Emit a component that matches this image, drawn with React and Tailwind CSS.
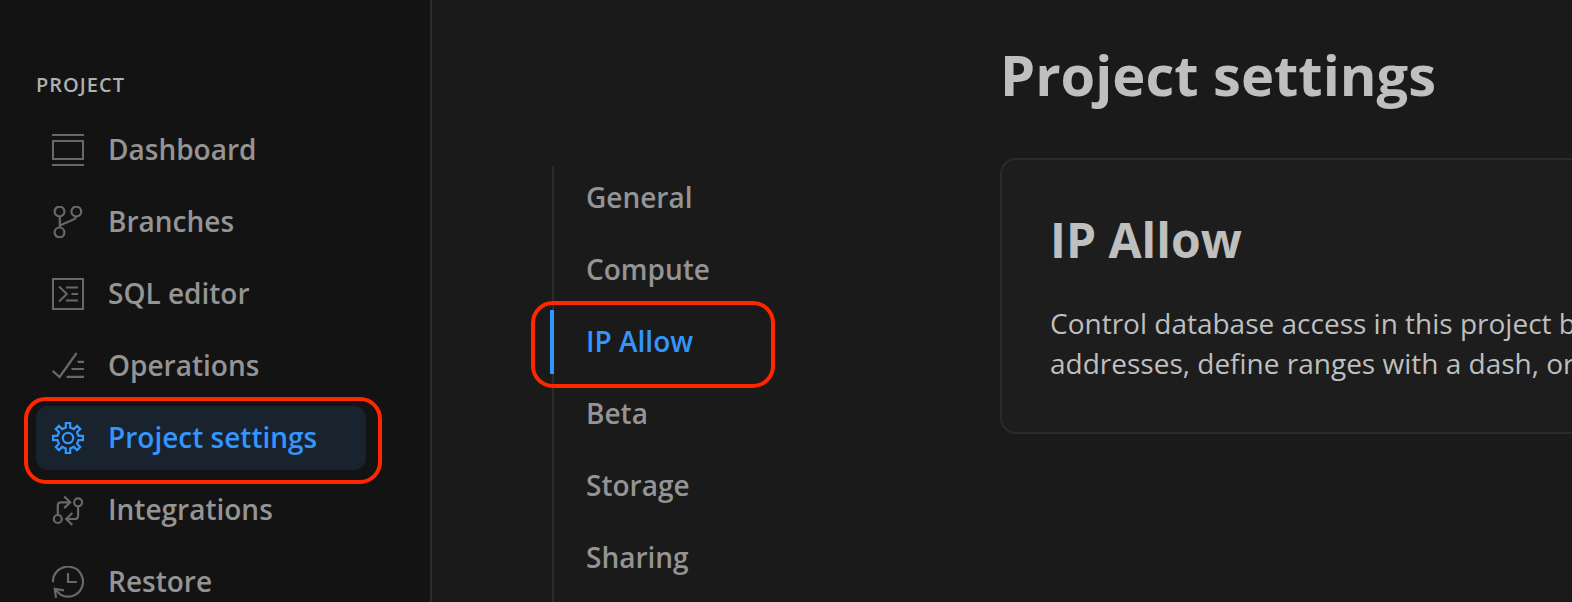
import clsx from "clsx";

const DashboardIcon = () => (
  <svg width="32" height="32" viewBox="0 0 32 32" fill="none" stroke="currentColor" strokeWidth="2">
    <path d="M0 1h32M0 31h32M1 7h30v18H1z" />
  </svg>
);

const BranchesIcon = () => (
  <svg width="32" height="32" viewBox="0 0 32 32" fill="none" stroke="currentColor" strokeWidth="2.2">
    <circle cx="7.5" cy="5.6" r="4.9" />
    <circle cx="24.3" cy="5.6" r="4.9" />
    <circle cx="7.5" cy="26.4" r="4.9" />
    <path d="M7.8 10.5v11M24.2 10.5l-1.5 2.5L7.8 19.5" />
  </svg>
);

const SqlIcon = () => (
  <svg width="32" height="32" viewBox="0 0 32 32" fill="none" stroke="currentColor" strokeWidth="2">
    <path d="M1 1h30v30H1zM7 8.5l7.8 7.5L7 23.5M14 9.5h12M19.5 16H26M14 22.5h12" />
  </svg>
);

const OperationsIcon = () => (
  <svg width="32" height="32" viewBox="0 0 32 32" fill="none" stroke="currentColor" strokeWidth="2.2">
    <path d="M.6 20.8l7 6.2L24.6 3M25.5 11.8H32M19.5 19H32M14.5 26.8H32" />
  </svg>
);

const SettingsIcon = () => (
  <svg width="32" height="32" viewBox="0 0 32 32" fill="none" stroke="currentColor" strokeWidth="2.2">
    <circle cx="16" cy="16" r="5.2" />
    <path d="M13.8 1h4.4v4.6l3.6 1.5 3.3-3.2 3.1 3.1-3.2 3.3 1.5 3.5H31v4.4h-4.5L25 21.7l3.2 3.3-3.1 3.1-3.3-3.2-3.6 1.5V31h-4.4v-4.6l-3.6-1.5-3.3 3.2L3.8 25 7 21.7l-1.5-3.5H1v-4.4h4.5L7 10.3 3.8 7l3.1-3.1 3.3 3.2 3.6-1.5z" />
  </svg>
);

const IntegrationsIcon = () => (
  <svg width="32" height="32" viewBox="0 0 32 32" fill="none" stroke="currentColor" strokeWidth="2.2">
    <circle cx="5.8" cy="25" r="4" />
    <circle cx="26.1" cy="8.3" r="4" />
    <path d="M5.8 21v-9.7a3 3 0 0 1 3-3h9.4M12.2 2.5l6 5.8-6 5.8M26.1 12.3V22a3 3 0 0 1-3 3h-9M20.3 19l-6 6 6 6" />
  </svg>
);

const RestoreIcon = () => (
  <svg width="32" height="32" viewBox="0 0 32 32" fill="none" stroke="currentColor" strokeWidth="2.2">
    <path d="M1 16.2a15 15 0 1 1 7.5 12.4L3 23.5" />
    <path d="M4 31.8L2.8 22.8l9.2 1.6M16 7v9h9" />
  </svg>
);

const navItems = [
  { label: "Dashboard", icon: DashboardIcon },
  { label: "Branches", icon: BranchesIcon },
  { label: "SQL editor", icon: SqlIcon },
  { label: "Operations", icon: OperationsIcon },
  { label: "Project settings", icon: SettingsIcon, active: true },
  { label: "Integrations", icon: IntegrationsIcon },
  { label: "Restore", icon: RestoreIcon },
];

const sections = ["General", "Compute", "IP Allow", "Beta", "Storage", "Sharing"];

const Sidebar = () => (
  <aside className="w-[432px] shrink-0 border-r-2 border-[#2b2b2b] bg-[#131313] pl-9 pt-[70px]">
    <h3 className="mb-4 h-8 text-[20px] leading-[30px] tracking-[0.05em] text-[#afb0b0]">PROJECT</h3>
    <nav className="flex w-[330px] flex-col gap-2">
      {navItems.map(({ label, icon: Icon, active }) => (
        <a
          key={label}
          className={clsx(
            "relative flex h-16 items-center gap-6 rounded-xl px-4",
            active ? "bg-[#18232e] text-[#3395ff]" : "text-[#949494]"
          )}
        >
          <span className={clsx("shrink-0", !active && "text-[#686868]")}>
            <Icon />
          </span>
          <span className="pb-0.5 whitespace-nowrap">{label}</span>
          {active && (
            <span className="absolute -top-[9px] -right-4 -bottom-[14px] -left-3 rounded-[22px] border-4 border-[#ff2600]" />
          )}
        </a>
      ))}
    </nav>
  </aside>
);

const SectionNav = () => (
  <div className="ml-[120px] w-[446px] shrink-0 pt-[166px]">
    <ul className="flex h-full flex-col gap-2 border-l-2 border-[#2b2b2b]">
      {sections.map((name) => {
        const active = name === "IP Allow";
        return (
          <li
            key={name}
            className={clsx("relative flex h-16 shrink-0 items-center pb-0.5 pl-8", active ? "text-[#3395ff]" : "text-[#949494]")}
          >
            {name}
            {active && (
              <>
                <span className="absolute inset-y-0 -left-1 w-1 bg-[#3395ff]" />
                <span className="absolute -top-[9px] -bottom-[14px] -left-[23px] w-[244px] rounded-[22px] border-4 border-[#ff2600]" />
              </>
            )}
          </li>
        );
      })}
    </ul>
  </div>
);

export default function App() {
  return (
    <div className="flex h-[602px] w-[1572px] overflow-hidden bg-[#1a1a1a] font-['Open_Sans',sans-serif] text-[28px] leading-10 font-semibold">
      <Sidebar />
      <SectionNav />

      {/* Content */}
      <main className="shrink-0 pt-[38px] pl-0.5">
        <h1 className="h-[120px] text-[56px] leading-[72px] font-bold whitespace-nowrap text-[#bfbfbf]">Project settings</h1>
        <section className="h-[276px] w-[1000px] rounded-2xl border-2 border-[#2b2b2b] bg-[#1d1d1d] px-12 pt-12 text-[#bfbfbf]">
          <h2 className="text-[48px] leading-[64px] font-bold">IP Allow</h2>
          <p className="mt-[31px] font-normal whitespace-nowrap">
            Control database access in this project by
            <br />
            addresses, define ranges with a dash, or
          </p>
        </section>
      </main>
    </div>
  );
}
